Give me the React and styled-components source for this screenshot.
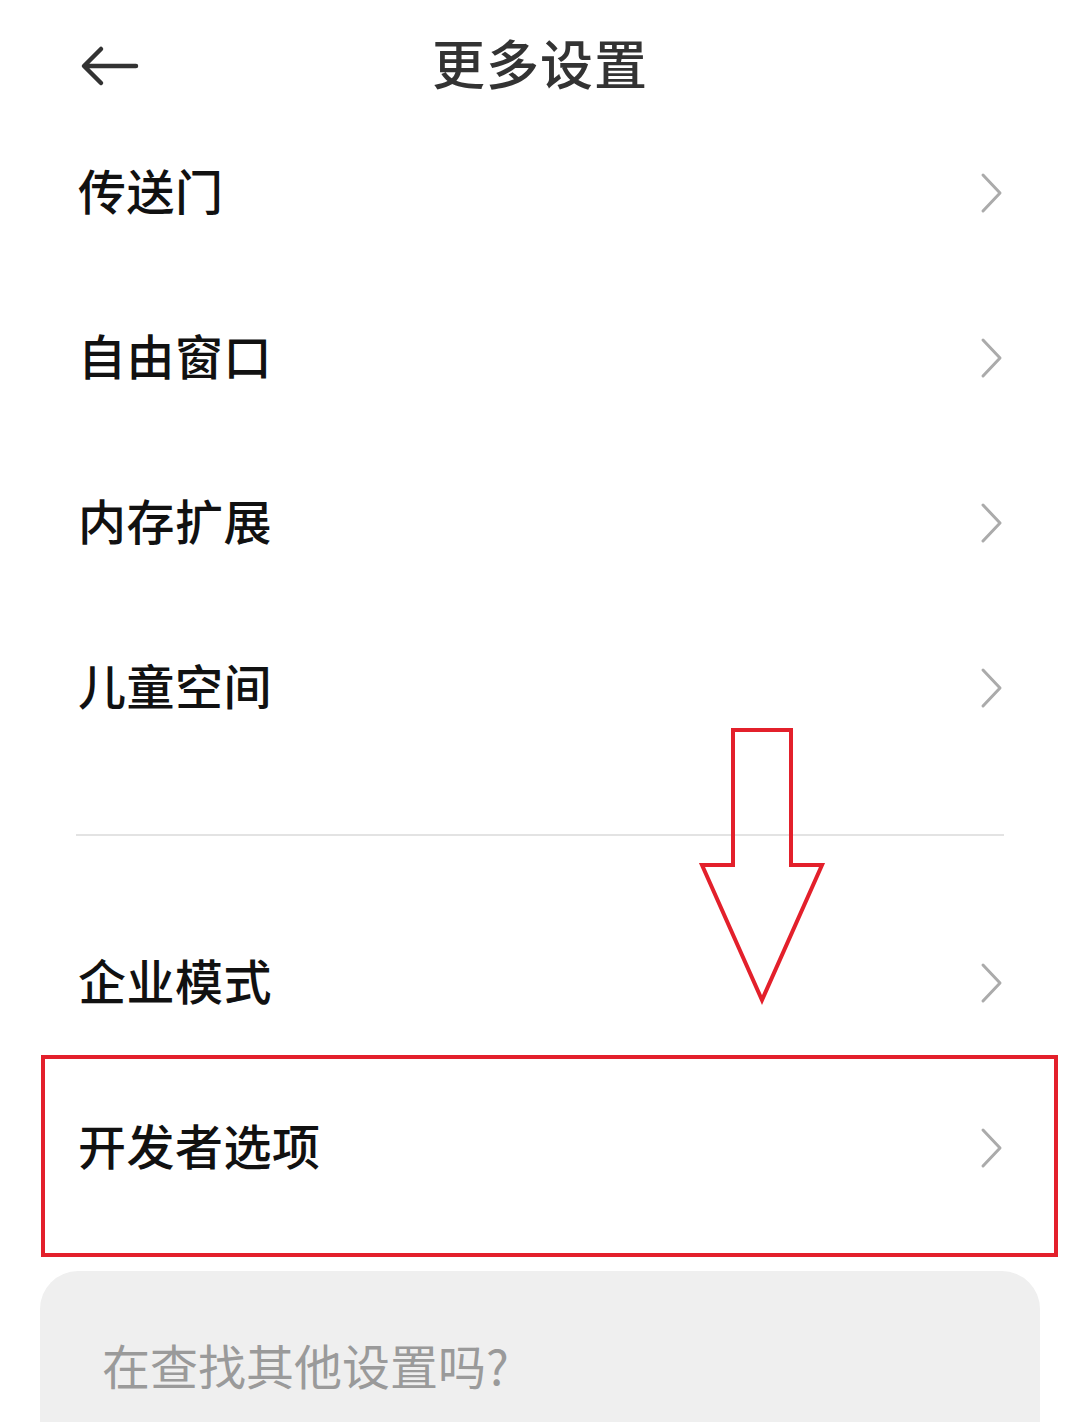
import React from 'react';
import styled, { createGlobalStyle } from 'styled-components';

const GlobalStyle = createGlobalStyle`
  html, body {
    margin: 0;
    padding: 0;
    background: #ffffff;
  }
  body {
    font-family: "Noto Sans CJK SC", "Noto Sans", sans-serif;
  }
`;

const Page = styled.div`
  position: relative;
  width: 1080px;
  height: 1422px;
  overflow: hidden;
  background: #ffffff;
`;

const Header = styled.header`
  position: relative;
  display: flex;
  align-items: center;
  justify-content: center;
  height: 130px;
  margin-bottom: -20px;
`;

const BackButton = styled.div`
  position: absolute;
  left: 80px;
  top: 44px;
  width: 60px;
  height: 44px;
  display: flex;
  align-items: center;
`;

const Title = styled.h1`
  margin: 0 0 6px 0;
  font-size: 53px;
  font-weight: 500;
  color: #333333;
  letter-spacing: 1px;
`;

const Group = styled.section`
  display: flex;
  flex-direction: column;
`;

const Row = styled.div`
  position: relative;
  display: flex;
  align-items: center;
  justify-content: space-between;
  height: 165px;
  padding: 0 73px 0 78px;
  box-sizing: border-box;
`;

const Label = styled.span`
  margin-bottom: 7px;
  font-size: 48px;
  font-weight: 500;
  color: #111111;
  letter-spacing: 0.5px;
`;

const Divider = styled.hr`
  border: none;
  height: 2px;
  background: #e3e3e3;
  margin: 64px 76px 64px 76px;
`;

const Highlight = styled.div`
  position: absolute;
  left: 41px;
  right: 22px;
  top: -10px;
  bottom: -27px;
  border: 4px solid #e3202b;
  pointer-events: none;
`;

const SearchCard = styled.div`
  margin: 41px 40px 0 40px;
  height: 200px;
  background: #efefef;
  border-radius: 38px 38px 0 0;
  padding: 58px 0 0 62px;
  box-sizing: border-box;
`;

const SearchText = styled.span`
  font-size: 48px;
  font-weight: 400;
  color: #9a9a9a;
`;

const Annotation = styled.svg`
  position: absolute;
  left: 698px;
  top: 726px;
`;

const Chevron = () => (
  <svg width="30" height="44" viewBox="0 0 30 44">
    <path
      d="M6 4 L23 22 L6 40"
      fill="none"
      stroke="#ababab"
      strokeWidth="3"
      strokeLinecap="round"
      strokeLinejoin="round"
    />
  </svg>
);

const items = ['传送门', '自由窗口', '内存扩展', '儿童空间'];

const App = () => (
  <Page>
    <GlobalStyle />
    <Header>
      <BackButton>
        <svg width="60" height="44" viewBox="0 0 60 44">
          <path
            d="M56 22 H5 M21 5 L4 22 L21 39"
            fill="none"
            stroke="#333333"
            strokeWidth="4.5"
            strokeLinecap="round"
            strokeLinejoin="round"
          />
        </svg>
      </BackButton>
      <Title>更多设置</Title>
    </Header>

    <Group>
      {items.map((t) => (
        <Row key={t}>
          <Label>{t}</Label>
          <Chevron />
        </Row>
      ))}
    </Group>

    <Divider />

    <Group>
      <Row>
        <Label>企业模式</Label>
        <Chevron />
      </Row>
      <Row>
        <Highlight />
        <Label>开发者选项</Label>
        <Chevron />
      </Row>
    </Group>

    <SearchCard>
      <SearchText>在查找其他设置吗?</SearchText>
    </SearchCard>

    <Annotation width="130" height="280" viewBox="0 0 130 280">
      <path
        d="M35 4 H93 V139 H124 L64 274 L4 139 H35 Z"
        fill="none"
        stroke="#e3202b"
        strokeWidth="4"
        strokeLinejoin="miter"
      />
    </Annotation>
  </Page>
);

export default App;
